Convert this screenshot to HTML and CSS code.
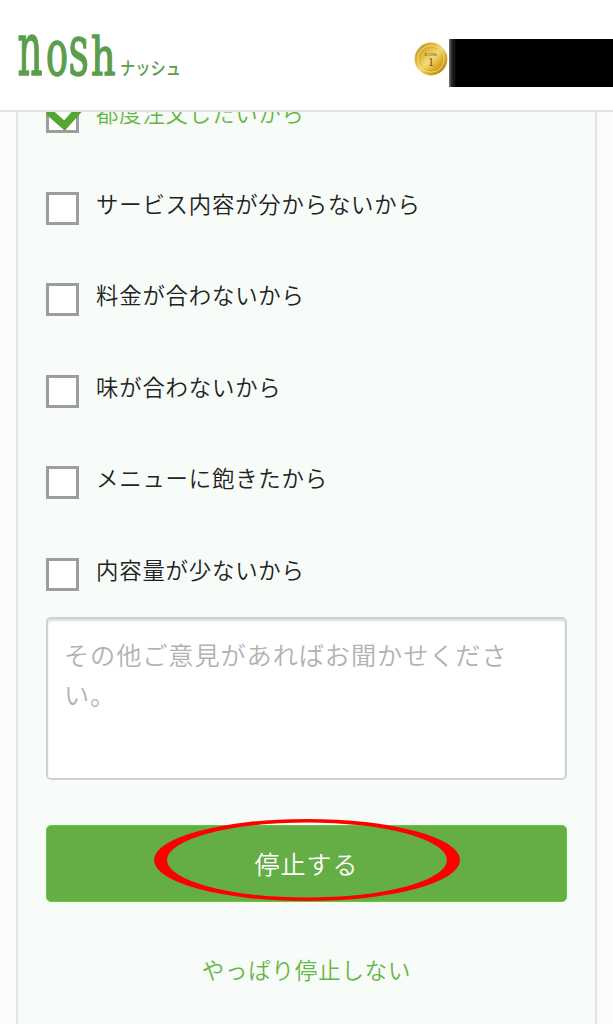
FILE: index.html
```
<!doctype html>

<html lang="ja">
<head>
  <meta charset="utf-8">
  <title>nosh ナッシュ</title>
  <link rel="stylesheet" href="styles.css">
</head>

<body>
  <header class="header">
    <svg class="logo" width="170" height="52" viewBox="0 0 170 52" role="img" aria-label="nosh ナッシュ">
      <text class="logo-word" y="45"><tspan x="1.5" font-size="74" textLength="25" lengthAdjust="spacingAndGlyphs">n</tspan><tspan x="30" font-size="63" textLength="22" lengthAdjust="spacingAndGlyphs">o</tspan><tspan x="52.5" font-size="71" textLength="20.5" lengthAdjust="spacingAndGlyphs">s</tspan><tspan x="75" font-size="52" textLength="24.5" lengthAdjust="spacingAndGlyphs">h</tspan></text>
      <text class="logo-kana" x="104" y="45" font-size="18" textLength="61" lengthAdjust="spacingAndGlyphs">ナッシュ</text>
    </svg>
    <div class="account">
      <svg class="medal" width="34" height="34" viewBox="0 0 34 34">
        <defs>
          <linearGradient id="gold" x1="0" y1="0" x2="1" y2="1">
            <stop offset="0" stop-color="#b98d18"/>
            <stop offset=".3" stop-color="#dfb63a"/>
            <stop offset=".5" stop-color="#f3dc78"/>
            <stop offset=".7" stop-color="#d9aa26"/>
            <stop offset="1" stop-color="#9c6f12"/>
          </linearGradient>
        </defs>
        <circle cx="17" cy="17" r="16.4" fill="url(#gold)"/>
        <circle cx="17" cy="17" r="13.2" fill="none" stroke="#f0d670" stroke-width="1"/>
        <circle cx="17" cy="17" r="11.6" fill="none" stroke="#c89b2a" stroke-width=".6" stroke-dasharray="2 1"/>
        <text class="medal-rank" x="17" y="13.5" font-size="4.5">RANK</text>
        <text class="medal-rank" x="17" y="23.5" font-size="12">1</text>
      </svg>
      <div class="account-name"></div>
    </div>
  </header>

  <main class="panel">
    <ul class="reasons">
      <li class="reason checked">
        <span class="box">
          <svg class="check" width="38" height="34" viewBox="0 0 38 34"><path d="M2 10 L18.5 24.5 L35 6" fill="none" stroke="#54a832" stroke-width="7.5"/></svg>
        </span>
        <span class="label">都度注文したいから</span>
      </li>
      <li class="reason"><span class="box"></span><span class="label">サービス内容が分からないから</span></li>
      <li class="reason"><span class="box"></span><span class="label">料金が合わないから</span></li>
      <li class="reason"><span class="box"></span><span class="label">味が合わないから</span></li>
      <li class="reason"><span class="box"></span><span class="label">メニューに飽きたから</span></li>
      <li class="reason"><span class="box"></span><span class="label">内容量が少ないから</span></li>
    </ul>
    <div class="opinion">その他ご意見があればお聞かせください。</div>
    <div class="stop">
      停止する
      <svg class="mark" width="308" height="84" viewBox="0 0 308 84">
        <path fill="#fe0000" fill-rule="evenodd" d="M0 42 A153 41 0 0 1 306 42 A153 41 0 0 1 0 42 Z M13 42 A140 37.5 0 0 0 293 42 A140 37.5 0 0 0 13 42 Z"/>
      </svg>
    </div>
    <a class="back">やっぱり停止しない</a>
  </main>
</body>
</html>
```
FILE: styles.css
```
* {
  box-sizing: border-box;
}

body {
  margin: 0;
  height: 1024px;
  overflow: hidden;
  background: #fdfbf9;
  color: #222;
  font-family: "Noto Sans CJK JP", sans-serif;
  font-weight: 350;
}

.header {
  position: fixed;
  top: 0;
  left: 0;
  z-index: 2;
  width: 100%;
  height: 112px;
  padding: 30px 0 0 16px;
  display: flex;
  justify-content: space-between;
  align-items: flex-start;
  background: #fff;
  border-bottom: 2px solid #e2e4e2;
}

.logo {
  overflow: visible;
}

.logo-word {
  fill: #5a9e4b;
  stroke: #5a9e4b;
  stroke-width: 1.6;
  stroke-linejoin: round;
  font-family: "DejaVu Serif", serif;
  font-weight: 400;
}

.logo-kana {
  fill: #5a9e4b;
  font-weight: 500;
}

.account {
  display: flex;
  align-items: center;
  gap: 1px;
  padding-top: 9px;
}

.medal {
  margin-top: -8px;
}

.medal-rank {
  fill: #77500e;
  font-family: "Liberation Serif", serif;
  text-anchor: middle;
}

.account-name {
  width: 164px;
  height: 48px;
  background: linear-gradient(90deg, #777 0, #222 3px, #000 8px);
}

.panel {
  width: 581px;
  height: 1024px;
  margin: 0 auto;
  padding: 100px 28px 0;
  background: #f7fcf9;
  border: solid #e2e4e2;
  border-width: 0 2px;
}

.reasons {
  margin: 0;
  padding: 0;
  list-style: none;
}

.reason {
  display: flex;
  align-items: flex-start;
  gap: 17px;
  height: 91.5px;
}

.reason:last-child {
  height: 59px;
}

.box {
  position: relative;
  width: 33px;
  height: 33px;
  background: #fff;
  border: 3px solid #9d9d9d;
}

.check {
  position: absolute;
  left: -3px;
  top: -2px;
}

.label {
  margin-top: -2px;
  font-size: 22.4px;
  line-height: 26px;
  letter-spacing: .8px;
}

.checked .label {
  margin-top: -1px;
  color: #67b545;
}

.opinion {
  height: 163px;
  padding: 15px 16px;
  background: #fff;
  border: 2px solid #d0d1d0;
  border-radius: 5px;
  box-shadow: inset 0 2px 2px #ddd;
  color: #b2b2b2;
  font-size: 25.2px;
  line-height: 40px;
  letter-spacing: .9px;
}

.stop {
  position: relative;
  height: 77px;
  margin-top: 45px;
  background: #65ad45;
  border: 1px solid #62c83c;
  border-radius: 5px;
  color: #fff;
  font-size: 25px;
  line-height: 75px;
  letter-spacing: 1px;
  text-align: center;
}

.mark {
  position: absolute;
  left: 107px;
  top: -8px;
}

.back {
  display: block;
  margin-top: 49px;
  color: #67b545;
  font-size: 22.4px;
  line-height: 36px;
  letter-spacing: .9px;
  text-align: center;
}
```
